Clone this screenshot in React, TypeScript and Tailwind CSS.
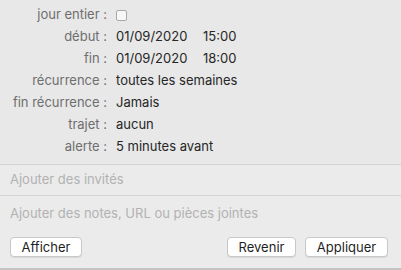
import React from "react";

const rows: { label: string; value?: string; time?: string; checkbox?: boolean }[] = [
  { label: "jour entier :", checkbox: true },
  { label: "début :", value: "01/09/2020", time: "15:00" },
  { label: "fin :", value: "01/09/2020", time: "18:00" },
  { label: "récurrence :", value: "toutes les semaines" },
  { label: "fin récurrence :", value: "Jamais" },
  { label: "trajet :", value: "aucun" },
  { label: "alerte :", value: "5 minutes avant" },
];

export default function App() {
  return (
    <div
      className="w-[401px] h-[270px] bg-[#e8e8e8] flex flex-col text-[13px] overflow-hidden"
      style={{ fontFamily: "Inter, 'Liberation Sans', sans-serif" }}
    >
      <div className="pt-[4px] pb-[6px] flex flex-col">
        {rows.map((r) => (
          <div key={r.label} className="h-[22px] flex items-center whitespace-nowrap">
            <div className="w-[107px] shrink-0 text-right text-[#6e6e6e]">{r.label}</div>
            <div className="pl-[9px] flex items-center text-[#262626] whitespace-nowrap">
              {r.checkbox ? (
                <div className="w-[11px] h-[11px] rounded-[2px] border border-[#a9a9a9] bg-[#f7f7f7]" />
              ) : r.time ? (
                <>
                  <span className="w-[87px]">{r.value}</span>
                  <span>{r.time}</span>
                </>
              ) : (
                <span>{r.value}</span>
              )}
            </div>
          </div>
        ))}
      </div>
      <div className="border-t border-[#d3d3d3] h-[31px] flex items-center px-[10px] text-[#b2b2b2] bg-[#ebebeb]">
        Ajouter des invités
      </div>
      <div className="border-t border-[#d3d3d3] flex-1 flex flex-col bg-[#ebebeb]">
        <div className="h-[36px] flex items-center px-[10px] text-[#b2b2b2]">
          Ajouter des notes, URL ou pièces jointes
        </div>
        <div className="flex items-center px-[10px] pt-[5px]">
          <button className="h-[20px] w-[72px] rounded-[4px] bg-white border border-[#c8c8c8] shadow-[0_1px_0_rgba(0,0,0,0.08)] text-[#1f1f1f] leading-none">
            Afficher
          </button>
          <div className="flex-1" />
          <button className="h-[20px] w-[69px] rounded-[4px] bg-white border border-[#c8c8c8] shadow-[0_1px_0_rgba(0,0,0,0.08)] text-[#1f1f1f] leading-none">
            Revenir
          </button>
          <button className="ml-[9px] h-[20px] w-[83px] rounded-[4px] bg-white border border-[#c8c8c8] shadow-[0_1px_0_rgba(0,0,0,0.08)] text-[#1f1f1f] leading-none mr-[3px]">
            Appliquer
          </button>
        </div>
      </div>
      <div className="h-[2px] bg-[#c4c4c4]" />
    </div>
  );
}
